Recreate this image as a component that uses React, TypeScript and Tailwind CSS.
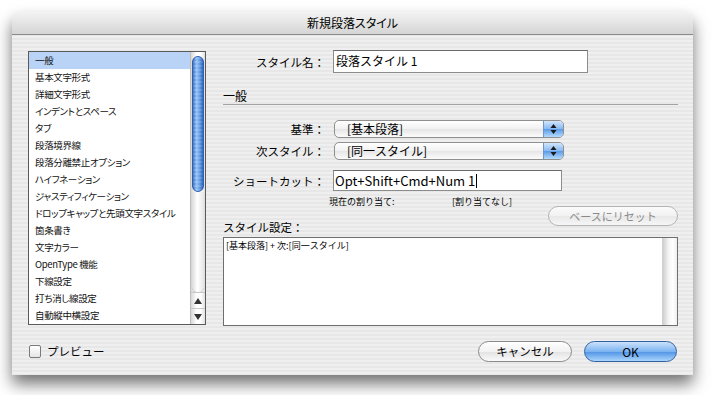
import React from "react";

const items = [
  "一般",
  "基本文字形式",
  "詳細文字形式",
  "インデントとスペース",
  "タブ",
  "段落境界線",
  "段落分離禁止オプション",
  "ハイフネーション",
  "ジャスティフィケーション",
  "ドロップキャップと先頭文字スタイル",
  "箇条書き",
  "文字カラー",
  "OpenType 機能",
  "下線設定",
  "打ち消し線設定",
  "自動縦中横設定",
];

function UpDown() {
  return (
    <svg width="7" height="12" viewBox="0 0 7 12">
      <path d="M3.5 1 L6.5 5 L0.5 5 Z" fill="#1a1a1a" />
      <path d="M3.5 11 L6.5 7 L0.5 7 Z" fill="#1a1a1a" />
    </svg>
  );
}

function Popup({ text }: { text: string }) {
  return (
    <div className="flex h-[18px] w-[230px] overflow-hidden rounded-[5px] border border-[#8f8f8f] bg-[linear-gradient(#ffffff,#f1f1f1_50%,#e6e6e6_51%,#fbfbfb)]">
      <div className="flex-1 whitespace-nowrap pl-[12px] text-[12px] leading-[16px]">{text}</div>
      <div className="flex w-[20px] items-center justify-center border-l border-[#6f95cc] bg-[linear-gradient(#d2e6fc,#86b8f2_50%,#5a9ae8_51%,#b4dafd)]">
        <UpDown />
      </div>
    </div>
  );
}

const label = "w-[104px] shrink-0 whitespace-nowrap pr-[2px] text-right text-[11.5px] leading-[16px]";

export default function App() {
  return (
    <div className="h-[395px] w-[716px] overflow-hidden bg-white font-['Noto_Sans_CJK_JP',sans-serif] text-black">
      <div className="ml-[12px] mt-[12px] flex h-[363px] w-[681px] flex-col rounded-t-[7px] bg-[repeating-linear-gradient(180deg,#efefef_0px,#efefef_2px,#e7e7e7_2px,#e7e7e7_4px)] shadow-[0_9px_16px_rgba(0,0,0,0.55)]">
        <div className="flex h-[23px] shrink-0 items-center justify-center rounded-t-[7px] border-b border-[#8a8a8a] bg-[linear-gradient(#f3f3f3,#d5d5d5)] text-[12px] leading-none [font-feature-settings:'palt']">
          新規段落スタイル
        </div>
        <div className="flex flex-1 flex-col pl-[16px] pr-[15px]">
          <div className="flex pt-[15px]">
            {/* list */}
            <div className="mt-[1px] flex h-[274px] w-[178px] shrink-0 border border-[#5a5a5a] bg-white">
              <div className="min-w-0 flex-1 overflow-hidden text-[9.5px] leading-[17px] tracking-[-0.35px] text-[#111] [font-feature-settings:'palt']">
                {items.map((t, i) => (
                  <div
                    key={t}
                    className={
                      i === 0
                        ? "h-[17px] whitespace-nowrap bg-[#b8d3f6] pl-[6px]"
                        : "h-[17px] whitespace-nowrap pl-[6px]"
                    }
                  >
                    {t}
                  </div>
                ))}
              </div>
              <div className="flex w-[15px] shrink-0 flex-col border-l border-[#bdbdbd] bg-[linear-gradient(90deg,#d8d8d8,#ffffff_40%,#ffffff_70%,#e0e0e0)]">
                <div className="mx-auto mt-[4px] h-[136px] w-[12px] rounded-full border border-[#2f5fae] bg-[repeating-linear-gradient(180deg,rgba(255,255,255,0.08)_0px,rgba(255,255,255,0.08)_2px,rgba(0,0,0,0.04)_2px,rgba(0,0,0,0.04)_4px),linear-gradient(90deg,#3f74cc,#9cc6f6_35%,#6aa6ec_65%,#2d63c1)]" />
                <div className="mx-auto h-[100px] w-[12px] rounded-b-full bg-[linear-gradient(90deg,#dcdcdc,#ffffff_45%,#e4e4e4)] shadow-[0_1px_1px_rgba(0,0,0,0.2)]" />
                <div className="mt-auto flex h-[16px] items-center justify-center border-t border-[#c8c8c8]">
                  <svg width="8" height="6" viewBox="0 0 8 6"><path d="M4 0 L8 6 L0 6 Z" fill="#333" /></svg>
                </div>
                <div className="flex h-[16px] items-center justify-center border-t border-[#c8c8c8]">
                  <svg width="8" height="6" viewBox="0 0 8 6"><path d="M4 6 L8 0 L0 0 Z" fill="#333" /></svg>
                </div>
              </div>
            </div>

            {/* right column */}
            <div className="ml-[17px] flex w-[455px] flex-col">
              <div className="flex h-[23px] items-center">
                <div className={label}>スタイル名：</div>
                <div className="ml-[6px] h-[23px] w-[255px] whitespace-nowrap border border-[#8c8c8c] border-t-[#6a6a6a] bg-white pl-[2px] text-[12px] leading-[20px]">
                  段落スタイル 1
                </div>
              </div>

              <div className="mt-[15px] h-[17px] border-b border-[#a3a3a3] text-[12px] leading-[15px]">一般</div>

              <div className="mt-[15px] flex items-center">
                <div className={label}>基準：</div>
                <div className="ml-[7px]"><Popup text="[基本段落]" /></div>
              </div>
              <div className="mt-[4px] flex items-center">
                <div className={label}>次スタイル：</div>
                <div className="ml-[7px]"><Popup text="[同一スタイル]" /></div>
              </div>
              <div className="mt-[10px] flex items-center">
                <div className={label}>ショートカット：</div>
                <div className="ml-[6px] flex h-[21px] w-[229px] items-center whitespace-nowrap border border-[#8c8c8c] border-t-[#6a6a6a] bg-white pl-[1px] text-[13px]">
                  <span>Opt+Shift+Cmd+Num 1</span>
                  <span className="ml-[1px] h-[14px] w-[1px] bg-black" />
                </div>
              </div>
              <div className="mt-[5px] flex h-[12px] whitespace-nowrap text-[9px] leading-[12px]">
                <div className="ml-[106px] w-[123px]">現在の割り当て:</div>
                <div>[割り当てなし]</div>
              </div>
              <div className="-mt-[2px] flex items-start justify-between">
                <div className="mt-[13px] whitespace-nowrap text-[11.5px] leading-[16px]">スタイル設定：</div>
                <div className="flex h-[20px] w-[130px] items-center justify-center whitespace-nowrap rounded-full border border-[#b4b4b4] bg-[linear-gradient(#fbfbfb,#f1f1f1_50%,#e8e8e8_51%,#f6f6f6)] text-[11px] text-[#8a8a8a]">
                  ベースにリセット
                </div>
              </div>
              <div className="mt-[2px] flex h-[89px] border border-[#6e6e6e] bg-white">
                <div className="flex-1 whitespace-nowrap pl-[2px] pt-[1px] text-[9px] leading-[13px]">[基本段落] + 次:[同一スタイル]</div>
                <div className="w-[15px] border-l border-[#d0d0d0] bg-[linear-gradient(90deg,#cfcfcf,#f4f4f4_40%,#ffffff_70%,#eeeeee)]" />
              </div>
            </div>
          </div>

          {/* bottom row */}
          <div className="mt-[15px] flex h-[21px] items-center">
            <div className="ml-[1px] h-[13px] w-[12px] rounded-[2px] border border-[#7a7a7a] bg-[linear-gradient(#ffffff,#e6e6e6)]" />
            <div className="ml-[6px] whitespace-nowrap text-[11.5px]">プレビュー</div>
            <div className="ml-auto flex h-[21px] w-[94px] items-center justify-center whitespace-nowrap rounded-full border border-[#8a8a8a] bg-[linear-gradient(#ffffff,#f2f2f2_50%,#e2e2e2_51%,#fafafa)] text-[11.5px]">
              キャンセル
            </div>
            <div className="ml-[12px] mr-[1px] flex h-[21px] w-[93px] items-center justify-center rounded-full border border-[#33609f] bg-[linear-gradient(#cce2fb,#7cb3f1_50%,#4f92e6_51%,#aad6fc)] text-[12px]">
              OK
            </div>
          </div>
        </div>
      </div>
    </div>
  );
}
